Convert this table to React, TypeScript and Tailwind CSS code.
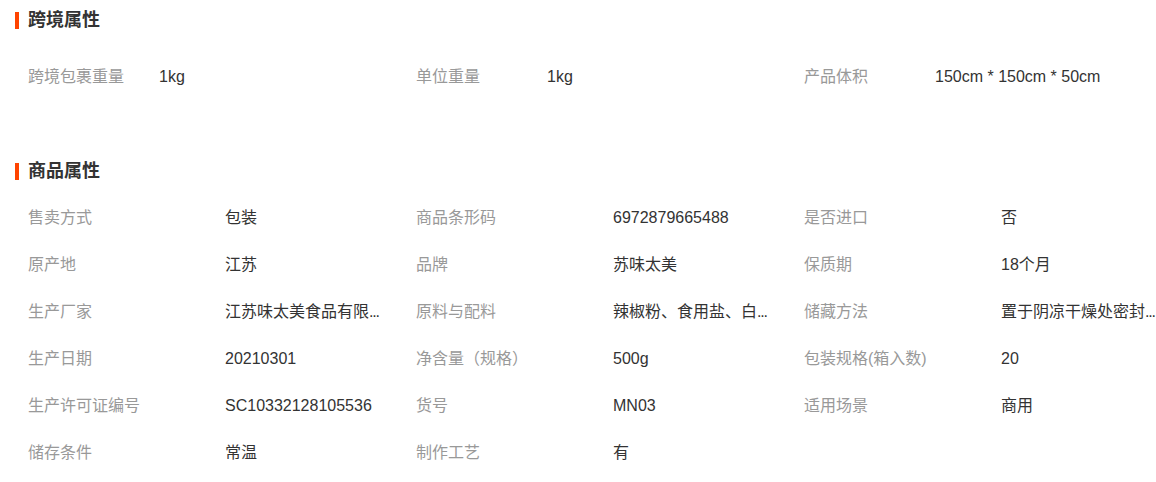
interface Attr {
  label: string;
  value: string;
  more?: boolean;
}

const crossBorder: Attr[] = [
  { label: '跨境包裹重量', value: '1kg' },
  { label: '单位重量', value: '1kg' },
  { label: '产品体积', value: '150cm * 150cm * 50cm' },
];

const goods: Attr[] = [
  { label: '售卖方式', value: '包装' },
  { label: '商品条形码', value: '6972879665488' },
  { label: '是否进口', value: '否' },
  { label: '原产地', value: '江苏' },
  { label: '品牌', value: '苏味太美' },
  { label: '保质期', value: '18个月' },
  { label: '生产厂家', value: '江苏味太美食品有限', more: true },
  { label: '原料与配料', value: '辣椒粉、食用盐、白', more: true },
  { label: '储藏方法', value: '置于阴凉干燥处密封', more: true },
  { label: '生产日期', value: '20210301' },
  { label: '净含量（规格）', value: '500g' },
  { label: '包装规格(箱入数)', value: '20' },
  { label: '生产许可证编号', value: 'SC10332128105536' },
  { label: '货号', value: 'MN03' },
  { label: '适用场景', value: '商用' },
  { label: '储存条件', value: '常温' },
  { label: '制作工艺', value: '有' },
];

const SectionTitle = ({ title }: { title: string }) => (
  <div className="flex h-10 items-center gap-[9px]">
    <span className="h-[17px] w-[4px] bg-[#ff4400]" />
    <h2 className="text-[18px] font-bold text-[#333]">{title}</h2>
  </div>
);

const AttrGrid = ({ items, labelWidth }: { items: Attr[]; labelWidth: string }) => (
  <div className="grid grid-cols-[388px_388px_388px] pl-[13px]">
    {items.map(item => (
      <div key={item.label} className="flex h-[47px] items-center whitespace-nowrap text-[16px]">
        <span className={`${labelWidth} shrink-0 text-[#999]`}>{item.label}</span>
        <span className="text-[#333]">
          {item.value}
          {item.more && <span className="tracking-[-1.2px]">...</span>}
        </span>
      </div>
    ))}
  </div>
);

export default function App() {
  return (
    <div
      className="h-[482px] w-[1156px] overflow-hidden bg-white pl-[15px]"
      style={{ fontFamily: '"Liberation Sans", "Noto Sans CJK SC", sans-serif' }}
    >
      <SectionTitle title="跨境属性" />
      <div className="mt-[13px]">
        <AttrGrid items={crossBorder} labelWidth="w-[131px]" />
      </div>
      <div className="mt-[51px]">
        <SectionTitle title="商品属性" />
      </div>
      <div className="mt-[3px]">
        <AttrGrid items={goods} labelWidth="w-[197px]" />
      </div>
    </div>
  );
}
